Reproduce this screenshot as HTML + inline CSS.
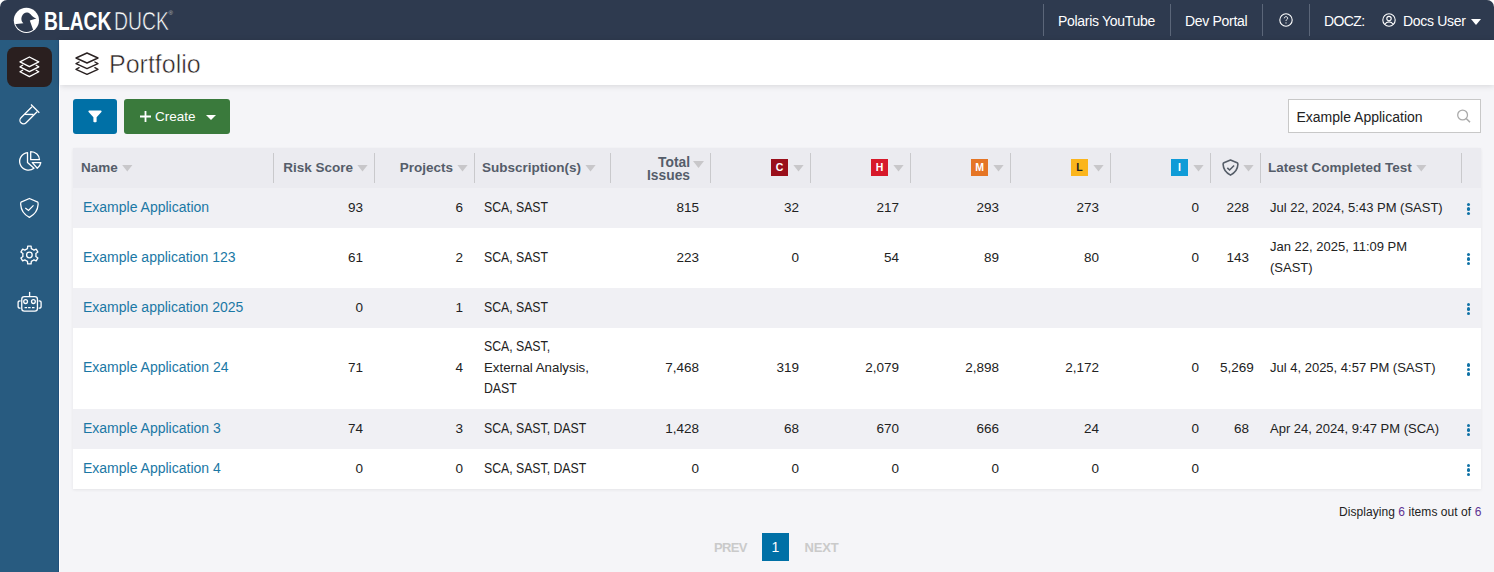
<!DOCTYPE html>
<html><head><meta charset="utf-8">
<style>
*{box-sizing:border-box;margin:0;padding:0}
html,body{width:1494px;height:572px;overflow:hidden;background:#fff;font-family:"Liberation Sans",sans-serif;}
#app{position:absolute;left:0;top:0;width:1494px;height:572px;background:#f5f5f8;border-radius:7px 7px 0 0;overflow:hidden}
#top{position:absolute;left:0;top:0;width:1494px;height:40px;background:#2e3a4f;color:#fff}
#side{position:absolute;left:0;top:40px;width:59px;height:532px;background:#285b80;border-right:1px solid #22507a}
#sideline{position:absolute;left:59px;top:40px;width:1px;height:532px;background:#fff}
#phead{position:absolute;left:60px;top:40px;width:1434px;height:45px;background:#fff;box-shadow:0 1px 6px rgba(0,0,0,.13)}
.abs{position:absolute}
svg.abs{overflow:visible}
.sep{position:absolute;top:4px;width:1px;height:32px;background:#5b6679}
.nav{position:absolute;top:12px;font-size:14px;line-height:18px;color:#fff;white-space:nowrap}
.btn{position:absolute;top:99px;height:35px;border-radius:3px}
#tbl{position:absolute;left:73px;top:148px;width:1408px;box-shadow:0 1px 3px rgba(0,0,0,.07)}
.row{position:relative;width:1408px}
.hd{height:40px;background:#ebebf0}
.odd{background:#f0f0f4}
.even{background:#fff}
.c{position:absolute;top:0;height:100%;display:flex;align-items:center;font-size:13px;color:#222;line-height:21px;white-space:nowrap;padding-bottom:2px}
.r{justify-content:flex-end;padding-right:11px}
.l{padding-left:10px}
.hd .c{font-weight:bold;color:#555d6a;font-size:13.5px;padding-bottom:2px}
.hd .r{padding-right:6px}
.hd .l{padding-left:8px}
.vs{position:absolute;top:5px;width:1px;height:30px;background:#c9c9cc}
.caret{display:inline-block;width:11px;height:7px;margin-left:4px;margin-top:2px;flex:none;background:#c8c7ca;clip-path:polygon(0 0,100% 0,50% 100%)}
.lnk{color:#1b78a5;font-size:14px}
.sub{display:inline-block;font-size:14px;transform:scaleX(.875);transform-origin:0 50%}
.ext{display:inline-block;font-size:13.3px;transform:scaleX(1.143);transform-origin:0 50%}
.badge{display:inline-block;width:17px;height:17px;font-size:10.5px;font-weight:bold;color:#fff;text-align:center;line-height:17px;flex:none}
.kb{position:absolute;left:1394px;top:1px;height:100%;display:flex;flex-direction:column;justify-content:center;align-items:center;width:3px}
.kb i{display:block;width:3.2px;height:3.2px;border-radius:50%;background:#0f72a6;margin:0.65px 0}
</style></head><body>
<div id="app">
  <div id="top">
    <svg class="abs" style="left:10px;top:4px" width="40" height="32" viewBox="0 0 40 32">
      <defs><clipPath id="cp"><circle cx="16.4" cy="16.3" r="11.6"/></clipPath></defs>
      <circle cx="16.4" cy="16.3" r="12.6" fill="#fff"/>
      <path clip-path="url(#cp)" fill="#2e3a4f" d="M0 20.6 L13.4 19.2 C11.2 17.6 11 14.6 11.8 12.4 C12.8 9.6 15.2 8.2 17.2 8.4 C19.2 8.6 20.4 9.8 21.4 11.2 C22.6 12.8 24.6 13.8 26.4 14.5 L19.8 16.4 L23.2 26 L23.2 40 L0 40 Z"/>
    </svg>
    <div class="nav" style="left:44.3px;top:7px;font-size:25px;line-height:28px;font-weight:bold;transform:scaleX(0.77);transform-origin:0 0">BLACK</div>
    <div class="nav" style="left:113.5px;top:7px;font-size:25px;line-height:28px;transform:scaleX(0.775);transform-origin:0 0;-webkit-text-stroke:0.6px #2e3a4f">DUCK</div>
    <div class="nav" style="left:168.5px;top:9px;font-size:6px;line-height:8px;color:#bbb">®</div>
    <div class="sep" style="left:1043px"></div>
    <div class="sep" style="left:1170px"></div>
    <div class="sep" style="left:1262px"></div>
    <div class="sep" style="left:1309px"></div>
    <div class="nav" style="left:1058px;letter-spacing:-0.3px">Polaris YouTube</div>
    <div class="nav" style="left:1185px;letter-spacing:-0.3px">Dev Portal</div>
    <svg class="abs" style="left:1278.5px;top:12.6px" width="14" height="14" viewBox="0 0 14 14"><circle cx="7" cy="7" r="6.2" fill="none" stroke="#fff" stroke-width="1.1"/><path d="M5.3 5.3 C5.3 4.3 6 3.7 7 3.7 C8 3.7 8.7 4.3 8.7 5.2 C8.7 6.3 7 6.5 7 7.9" fill="none" stroke="#fff" stroke-width="1"/><circle cx="7" cy="9.9" r="0.55" fill="#fff"/></svg>
    <div class="nav" style="left:1324px;letter-spacing:-0.6px">DOCZ:</div>
    <svg class="abs" style="left:1382px;top:12.6px" width="14" height="14" viewBox="0 0 14 14"><circle cx="7" cy="7" r="6.2" fill="none" stroke="#fff" stroke-width="1.1"/><circle cx="7" cy="5.6" r="2.2" fill="none" stroke="#fff" stroke-width="1.1"/><path d="M3 11.3 C4 9.4 5.4 8.9 7 8.9 C8.6 8.9 10 9.4 11 11.3" fill="none" stroke="#fff" stroke-width="1.1"/></svg>
    <div class="nav" style="left:1403px;letter-spacing:-0.3px">Docs User</div>
    <div class="abs" style="left:1471px;top:18.5px;width:0;height:0;border-left:5px solid transparent;border-right:5px solid transparent;border-top:6px solid #fff"></div>
  </div>

  <div id="side">
    <div class="abs" style="left:7px;top:7px;width:45px;height:40px;background:#2a1f1f;border-radius:8px"></div>
    <div class="abs" style="left:0;top:-40px"><svg class="abs" style="left:17.200000000000003px;top:54.3px" width="24.8" height="25.6" viewBox="17.200000000000003 54.3 24.8 25.6"><path d="M29.6 57.3 L39.0 62.099999999999994 L29.6 66.89999999999999 L20.200000000000003 62.099999999999994 Z M22.83 65.52 L20.200000000000003 67.1 L29.6 71.89999999999999 L39.0 67.1 L36.37 65.52 M22.83 70.52 L20.200000000000003 72.1 L29.6 76.89999999999999 L39.0 72.1 L36.37 70.52" fill="none" stroke="#fff" stroke-width="1.3" stroke-linejoin="round" stroke-linecap="round"/></svg></div>
    <svg class="abs" style="left:14px;top:56px" width="32" height="36" viewBox="0 0 32 36"><path d="M18 10.7 L7 21.7 A3.6 3.6 0 0 0 12.1 26.8 L23.1 15.8" fill="none" stroke="#fff" stroke-width="1.3"/><path d="M17 8.5 L25.3 16.8 M10.7 18.4 L19.5 18.5" fill="none" stroke="#fff" stroke-width="1.3"/></svg>
    <svg class="abs" style="left:14px;top:104px" width="32" height="36" viewBox="0 0 32 36"><path d="M13.5 8.6 A8.8 8.8 0 1 0 20 24.2 L13.5 18.4 Z M16.7 7.6 L16.7 15.7 L25.5 15.7 A8.8 8.1 0 0 0 16.7 7.6 Z M18.3 18.6 L26.8 18.6 A8.8 8.8 0 0 1 23.3 24.3 Z" fill="none" stroke="#fff" stroke-width="1.3" stroke-linejoin="round"/></svg>
    <svg class="abs" style="left:14px;top:150px" width="32" height="36" viewBox="0 0 32 36"><path d="M15.4 8.5 L7 12.2 C6.6 12.5 6.6 13 6.7 14.5 C7 20 10 24.5 15.4 27.4 C20.8 24.5 23.8 20 24.1 14.5 C24.2 13 24.2 12.5 23.8 12.2 Z" fill="none" stroke="#fff" stroke-width="1.3" stroke-linejoin="round"/><path d="M11.3 18 L14.5 20.5 L19.5 15.4" fill="none" stroke="#fff" stroke-width="1.3"/></svg>
    <svg class="abs" style="left:14px;top:197px" width="32" height="36" viewBox="0 0 32 36"><path d="M12.10 12.28 L13.47 11.69 L13.68 9.17 L17.12 9.17 L17.33 11.69 L18.70 12.28 L19.90 13.17 L22.19 12.10 L23.91 15.07 L21.83 16.52 L22.00 18.00 L21.83 19.48 L23.91 20.93 L22.19 23.90 L19.90 22.83 L18.70 23.72 L17.33 24.31 L17.12 26.83 L13.68 26.83 L13.47 24.31 L12.10 23.72 L10.90 22.83 L8.61 23.90 L6.89 20.93 L8.97 19.48 L8.80 18.00 L8.97 16.52 L6.89 15.07 L8.61 12.10 L10.90 13.17 Z" fill="none" stroke="#fff" stroke-width="1.3" stroke-linejoin="round"/><circle cx="15.4" cy="18" r="2.8" fill="none" stroke="#fff" stroke-width="1.3"/></svg>
    <svg class="abs" style="left:12px;top:244px" width="36" height="36" viewBox="0 0 36 36"><path d="M17.6 7.9 L17.6 12.6" stroke="#fff" stroke-width="1.3"/><rect x="9.75" y="12.65" width="15.7" height="14.4" rx="2.6" fill="none" stroke="#fff" stroke-width="1.3"/><circle cx="13.6" cy="17.6" r="1.9" fill="none" stroke="#fff" stroke-width="1.3"/><circle cx="21.4" cy="17.6" r="1.9" fill="none" stroke="#fff" stroke-width="1.3"/><path d="M12.6 23.6 L15.1 23.6 M16.1 23.6 L18.6 23.6 M20 23.6 L22.5 23.6" stroke="#fff" stroke-width="1.3"/><path d="M8.1 16.9 Q6.1 16.9 6.1 18.6 L6.1 22.4 Q6.1 24.1 8.1 24.1 M27.1 16.9 Q29.1 16.9 29.1 18.6 L29.1 22.4 Q29.1 24.1 27.1 24.1" fill="none" stroke="#fff" stroke-width="1.3" stroke-linecap="round"/></svg>
  </div>
  <div id="sideline"></div>

  <div id="phead">
    <div class="abs" style="left:-60px;top:-40px"><svg class="abs" style="left:73.2px;top:50.0px" width="28" height="27.3" viewBox="73.2 50.0 28 27.3"><path d="M87.2 53.0 L98.2 58.0 L87.2 63.0 L76.2 58.0 Z M79.28 62.00 L76.2 63.65 L87.2 68.65 L98.2 63.65 L95.12 62.00 M79.28 67.65 L76.2 69.3 L87.2 74.3 L98.2 69.3 L95.12 67.65" fill="none" stroke="#2a2222" stroke-width="1.4" stroke-linejoin="round" stroke-linecap="round"/></svg></div>
    <div class="abs" style="left:49px;top:9px;font-size:25px;line-height:30px;color:#2a2222;-webkit-text-stroke:0.5px #fff">Portfolio</div>
  </div>

  <div class="btn" style="left:73px;width:44px;background:#0070a6">
    <svg class="abs" style="left:15px;top:10.8px" width="14" height="13" viewBox="0 0 14 13"><path d="M1.2 0.6 L12.8 0.6 Q14.2 0.8 13.4 2 L8.6 7.2 L8.6 11.8 Q7 12.9 5.4 11.8 L5.4 7.2 L0.6 2 Q-0.2 0.8 1.2 0.6 Z" fill="#fff"/></svg>
  </div>
  <div class="btn" style="left:124px;width:106px;background:#3a7a3c">
    <svg class="abs" style="left:15.5px;top:11.5px" width="11" height="11" viewBox="0 0 11 11"><path d="M5.5 0 L5.5 11 M0 5.5 L11 5.5" stroke="#fff" stroke-width="1.8"/></svg>
    <div class="abs" style="left:31px;top:9px;font-size:13.5px;line-height:18px;color:#fff">Create</div>
    <div class="abs" style="left:82px;top:15.5px;width:0;height:0;border-left:5px solid transparent;border-right:5px solid transparent;border-top:5.5px solid #fff"></div>
  </div>

  <div class="abs" style="left:1288px;top:99px;width:193px;height:34px;background:#fff;border:1px solid #c8c8c8">
    <div class="abs" style="left:7.5px;top:8px;font-size:14px;line-height:18px;color:#222">Example Application</div>
    <svg class="abs" style="left:168px;top:9px" width="16" height="16" viewBox="0 0 16 16"><circle cx="5.6" cy="6" r="4.9" fill="none" stroke="#aaa" stroke-width="1.3"/><path d="M9.2 9.5 L13 13.3" stroke="#aaa" stroke-width="1.6"/></svg>
  </div>

  <div id="tbl">
<div class="row hd">
<div class="c l" style="left:0px;width:201px;">Name<span class="caret"></span></div>
<div class="c r" style="left:201px;width:100px;">Risk Score<span class="caret"></span></div>
<div class="c r" style="left:301px;width:100px;">Projects<span class="caret"></span></div>
<div class="c l" style="left:401px;width:136px;">Subscription(s)<span class="caret"></span></div>
<div class="c r" style="left:537px;width:100px;"><span style="text-align:right;line-height:12.8px;display:inline-block;margin-top:5px;font-size:13.8px">Total<br>Issues</span><span class="caret" style="margin-top:-5px;margin-left:3px"></span></div>
<div class="c r" style="left:637px;width:100px;"><span class="badge" style="background:#9a0f1b;color:#fff;margin-right:1px">C</span><span class="caret"></span></div>
<div class="c r" style="left:737px;width:100px;"><span class="badge" style="background:#d7182a;color:#fff;margin-right:1px">H</span><span class="caret"></span></div>
<div class="c r" style="left:837px;width:100px;"><span class="badge" style="background:#e57525;color:#fff;margin-right:1px">M</span><span class="caret"></span></div>
<div class="c r" style="left:937px;width:100px;"><span class="badge" style="background:#fbb51c;color:#222;margin-right:1px">L</span><span class="caret"></span></div>
<div class="c r" style="left:1037px;width:100px;"><span class="badge" style="background:#0f9bd7;color:#fff;margin-right:1px">I</span><span class="caret"></span></div>
<div class="c r" style="left:1137px;width:50px;"><svg width="17" height="17" viewBox="0 0 17 17" style="flex:none;margin-left:-1px;overflow:visible"><path d="M8.5 1.1 L1.9 3.8 C1.3 4.1 1.1 4.5 1.1 5.3 C1.3 10.2 3.9 13.8 8.5 16.1 C13.1 13.8 15.7 10.2 15.9 5.3 C15.9 4.5 15.7 4.1 15.1 3.8 Z" fill="none" stroke="#555d68" stroke-width="1.6" stroke-linejoin="round"/><path d="M5.3 8.9 L7.6 11 L12.1 6.5" fill="none" stroke="#555d68" stroke-width="1.6"/></svg><span class="caret"></span></div>
<div class="c l" style="left:1187px;width:201px;">Latest Completed Test<span class="caret"></span></div>
<div class="vs" style="left:200px"></div>
<div class="vs" style="left:301px"></div>
<div class="vs" style="left:401px"></div>
<div class="vs" style="left:537px"></div>
<div class="vs" style="left:637px"></div>
<div class="vs" style="left:737px"></div>
<div class="vs" style="left:837px"></div>
<div class="vs" style="left:937px"></div>
<div class="vs" style="left:1037px"></div>
<div class="vs" style="left:1137px"></div>
<div class="vs" style="left:1187px"></div>
<div class="vs" style="left:1388px"></div>
</div>
<div class="row odd" style="height:40px">
<div class="c l" style="left:0px;width:201px;"><span class="lnk">Example Application</span></div>
<div class="c r" style="left:201px;width:100px;font-size:13.5px;">93</div>
<div class="c r" style="left:301px;width:100px;font-size:13.5px;">6</div>
<div class="c l" style="left:401px;width:136px;"><span class="sub">SCA, SAST</span></div>
<div class="c r" style="left:537px;width:100px;font-size:13.5px;">815</div>
<div class="c r" style="left:637px;width:100px;font-size:13.5px;">32</div>
<div class="c r" style="left:737px;width:100px;font-size:13.5px;">217</div>
<div class="c r" style="left:837px;width:100px;font-size:13.5px;">293</div>
<div class="c r" style="left:937px;width:100px;font-size:13.5px;">273</div>
<div class="c r" style="left:1037px;width:100px;font-size:13.5px;">0</div>
<div class="c r" style="left:1137px;width:50px;font-size:13.5px;">228</div>
<div class="c l" style="left:1187px;width:201px;">Jul 22, 2024, 5:43 PM (SAST)</div>
<div class="kb"><i></i><i></i><i></i></div>
</div>
<div class="row even" style="height:60px">
<div class="c l" style="left:0px;width:201px;"><span class="lnk">Example application 123</span></div>
<div class="c r" style="left:201px;width:100px;font-size:13.5px;">61</div>
<div class="c r" style="left:301px;width:100px;font-size:13.5px;">2</div>
<div class="c l" style="left:401px;width:136px;"><span class="sub">SCA, SAST</span></div>
<div class="c r" style="left:537px;width:100px;font-size:13.5px;">223</div>
<div class="c r" style="left:637px;width:100px;font-size:13.5px;">0</div>
<div class="c r" style="left:737px;width:100px;font-size:13.5px;">54</div>
<div class="c r" style="left:837px;width:100px;font-size:13.5px;">89</div>
<div class="c r" style="left:937px;width:100px;font-size:13.5px;">80</div>
<div class="c r" style="left:1037px;width:100px;font-size:13.5px;">0</div>
<div class="c r" style="left:1137px;width:50px;font-size:13.5px;">143</div>
<div class="c l" style="left:1187px;width:201px;">Jan 22, 2025, 11:09 PM<br>(SAST)</div>
<div class="kb"><i></i><i></i><i></i></div>
</div>
<div class="row odd" style="height:40px">
<div class="c l" style="left:0px;width:201px;"><span class="lnk">Example application 2025</span></div>
<div class="c r" style="left:201px;width:100px;font-size:13.5px;">0</div>
<div class="c r" style="left:301px;width:100px;font-size:13.5px;">1</div>
<div class="c l" style="left:401px;width:136px;"><span class="sub">SCA, SAST</span></div>
<div class="kb"><i></i><i></i><i></i></div>
</div>
<div class="row even" style="height:81px">
<div class="c l" style="left:0px;width:201px;"><span class="lnk">Example Application 24</span></div>
<div class="c r" style="left:201px;width:100px;font-size:13.5px;">71</div>
<div class="c r" style="left:301px;width:100px;font-size:13.5px;">4</div>
<div class="c l" style="left:401px;width:136px;"><span class="sub">SCA, SAST,<br><span class="ext">External Analysis,</span><br>DAST</span></div>
<div class="c r" style="left:537px;width:100px;font-size:13.5px;">7,468</div>
<div class="c r" style="left:637px;width:100px;font-size:13.5px;">319</div>
<div class="c r" style="left:737px;width:100px;font-size:13.5px;">2,079</div>
<div class="c r" style="left:837px;width:100px;font-size:13.5px;">2,898</div>
<div class="c r" style="left:937px;width:100px;font-size:13.5px;">2,172</div>
<div class="c r" style="left:1037px;width:100px;font-size:13.5px;">0</div>
<div class="c r" style="left:1137px;width:50px;font-size:13.5px;justify-content:flex-start;padding-left:10px;padding-right:0;">5,269</div>
<div class="c l" style="left:1187px;width:201px;">Jul 4, 2025, 4:57 PM (SAST)</div>
<div class="kb"><i></i><i></i><i></i></div>
</div>
<div class="row odd" style="height:40px">
<div class="c l" style="left:0px;width:201px;"><span class="lnk">Example Application 3</span></div>
<div class="c r" style="left:201px;width:100px;font-size:13.5px;">74</div>
<div class="c r" style="left:301px;width:100px;font-size:13.5px;">3</div>
<div class="c l" style="left:401px;width:136px;"><span class="sub">SCA, SAST, DAST</span></div>
<div class="c r" style="left:537px;width:100px;font-size:13.5px;">1,428</div>
<div class="c r" style="left:637px;width:100px;font-size:13.5px;">68</div>
<div class="c r" style="left:737px;width:100px;font-size:13.5px;">670</div>
<div class="c r" style="left:837px;width:100px;font-size:13.5px;">666</div>
<div class="c r" style="left:937px;width:100px;font-size:13.5px;">24</div>
<div class="c r" style="left:1037px;width:100px;font-size:13.5px;">0</div>
<div class="c r" style="left:1137px;width:50px;font-size:13.5px;">68</div>
<div class="c l" style="left:1187px;width:201px;">Apr 24, 2024, 9:47 PM (SCA)</div>
<div class="kb"><i></i><i></i><i></i></div>
</div>
<div class="row even" style="height:40px">
<div class="c l" style="left:0px;width:201px;"><span class="lnk">Example Application 4</span></div>
<div class="c r" style="left:201px;width:100px;font-size:13.5px;">0</div>
<div class="c r" style="left:301px;width:100px;font-size:13.5px;">0</div>
<div class="c l" style="left:401px;width:136px;"><span class="sub">SCA, SAST, DAST</span></div>
<div class="c r" style="left:537px;width:100px;font-size:13.5px;">0</div>
<div class="c r" style="left:637px;width:100px;font-size:13.5px;">0</div>
<div class="c r" style="left:737px;width:100px;font-size:13.5px;">0</div>
<div class="c r" style="left:837px;width:100px;font-size:13.5px;">0</div>
<div class="c r" style="left:937px;width:100px;font-size:13.5px;">0</div>
<div class="c r" style="left:1037px;width:100px;font-size:13.5px;">0</div>
<div class="kb"><i></i><i></i><i></i></div>
</div>
  </div>

  <div class="abs" style="left:1339px;top:504px;font-size:12px;line-height:16px;color:#222;white-space:nowrap;letter-spacing:0.06px">Displaying <span style="color:#5e3293">6</span> items out of <span style="color:#5e3293">6</span></div>

  <div class="abs" style="left:714px;top:541px;font-size:13px;line-height:14px;font-weight:bold;color:#cacaca;letter-spacing:-0.7px">PREV</div>
  <div class="abs" style="left:762px;top:533px;width:27px;height:28px;background:#0070a6;color:#fff;font-size:14px;line-height:28px;text-align:center">1</div>
  <div class="abs" style="left:804.5px;top:541px;font-size:13px;line-height:14px;font-weight:bold;color:#cacaca;letter-spacing:-0.2px">NEXT</div>
</div>
</body></html>
